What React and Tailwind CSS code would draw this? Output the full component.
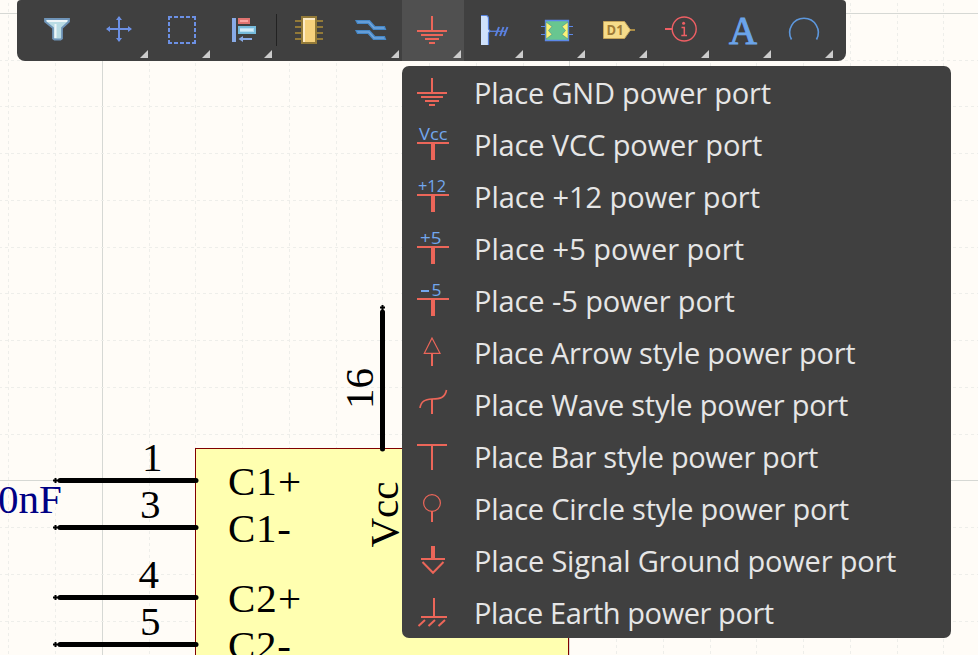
import React from "react";

const RED = "#ec6659";
const BLUE = "#72a7ee";

const VERTICALS = [8, 55, 102, 149, 195, 242, 289, 336, 382, 429, 476, 523, 569, 616, 663, 710, 756, 803, 850, 897, 943];
const HORIZONTALS = [13, 60, 106, 153, 200, 247, 293, 340, 387, 434, 480, 527, 574, 621];
const MAJOR_X = [102, 569];
const MAJOR_Y = [13, 480];

const PINS = [
  { n: "1", nx: 142, name: "C1+", w: 73, y: 480.5 },
  { n: "3", nx: 140, name: "C1-", w: 63, y: 527.5 },
  { n: "4", nx: 138.5, name: "C2+", w: 73, y: 597.5 },
  { n: "5", nx: 140, name: "C2-", w: 63, y: 644.5 },
];

function Schematic() {
  return (
    <svg width="978" height="655" viewBox="0 0 978 655" className="block font-['Liberation_Serif',serif]">
      {VERTICALS.map((x) => (
        <line key={x} x1={x + 0.5} x2={x + 0.5} y1="3" y2="655" stroke={MAJOR_X.includes(x) ? "#d6d8d4" : "#eeeeea"} strokeDasharray={MAJOR_X.includes(x) ? undefined : "3 3"} />
      ))}
      {HORIZONTALS.map((y) => (
        <line key={y} y1={y + 0.5} y2={y + 0.5} x1="-1" x2="978" stroke={MAJOR_Y.includes(y) ? "#d6d8d4" : "#eeeeea"} strokeDasharray={MAJOR_Y.includes(y) ? undefined : "3 3"} />
      ))}
      <rect x="195.5" y="448.5" width="373" height="260" fill="#ffffb0" stroke="#800000" />
      {PINS.map((p) => (
        <g key={p.n}>
          <path d={`M60 ${p.y}H196`} stroke="#000" strokeWidth="5" strokeLinecap="round" />
          <path d={`M53 ${p.y}H60M55.5 ${p.y - 2.5}v5`} stroke="#000" strokeWidth="2" />
          <text x={p.nx} y={p.y - 9.5} fontSize="41">{p.n}</text>
          <text x="228" y={p.y + 14} fontSize="41" textLength={p.w}>{p.name}</text>
        </g>
      ))}
      <path d="M382.5 312V449" stroke="#000" strokeWidth="5" strokeLinecap="round" />
      <path d="M382.5 305V312M380 307.5h5" stroke="#000" strokeWidth="2" />
      <text transform="translate(373 409) rotate(-90)" fontSize="41">16</text>
      <text transform="translate(397.5 547.5) rotate(-90)" fontSize="41">Vcc</text>
      <text x="-2" y="513" fontSize="41" fill="#000084">0nF</text>
    </svg>
  );
}

const TOOLS = [
  {
    id: "filter",
    art: (
      <>
        <path d="M18 19H42V21.5L35 28V38.5L33.5 39.5H27.5L26 38.5V28L18 21.5Z" fill="#b9dce4" stroke="#6f94b8" strokeWidth="1.8" />
        <path d="M20 21H40M28.5 24V38" stroke="#eef5f8" strokeWidth="2" />
      </>
    ),
  },
  {
    id: "move",
    more: true,
    art: (
      <>
        <path d="M18 29H42M30 17V41" stroke="#6c90e4" strokeWidth="2" />
        <path d="M17 29l4-3v6zM43 29l-4-3v6zM30 16l-3 4h6zM30 42l-3-4h6z" fill="#6c90e4" />
      </>
    ),
  },
  {
    id: "select",
    more: true,
    art: <path d="M17 17H45M17 43H45M18 16V44M44 16V44" fill="none" stroke="#6c90e4" strokeWidth="2" strokeDasharray="4 2" />,
  },
  {
    id: "align",
    more: true,
    art: (
      <>
        <path d="M19 18h4v24h-4z" fill="#88aae6" />
        <path d="M26 19h10v4H26z" fill="#f9a4a0" stroke="#df7370" strokeWidth="2" />
        <path d="M26 27h16v6H26z" fill="#b4dcf0" stroke="#76bbdc" strokeWidth="2" />
        <path d="M27 29h13v2H27z" fill="#d2ecf8" />
        <path d="M28 39H39" stroke="#88aae6" strokeWidth="2" />
        <path d="M25.5 39l4.5-3v6z" fill="#88aae6" />
      </>
    ),
  },
  {
    id: "part",
    divided: true,
    art: (
      <>
        <path d="M17 21H45M17 27H45M17 33H45M17 39H45" stroke="#937a38" strokeWidth="2" />
        <path d="M24 17h14v26H24z" fill="#f6d17c" stroke="#937a38" strokeWidth="2" />
        <path d="M26 42V19h11" fill="none" stroke="#fdebc6" strokeWidth="2" />
      </>
    ),
  },
  {
    id: "wire",
    more: true,
    art: (
      <path
        d="M16 20.7H29.5L35 26.7H44.5L45.5 29.3H33.5L28 23.3H17.5ZM16 30.7H29.5L35 36.7H44.5L45.5 39.3H33.5L28 33.3H17.5Z"
        fill="#70a5dc"
        stroke="#4588c8"
        strokeWidth="1.2"
      />
    ),
  },
  {
    id: "power",
    more: true,
    active: true,
    art: <path d="M29 16h2v14h14v2H15v-2h14zM19 34h22v2H19zM23 38h14v2H23zM27 42h6v2h-6z" fill={RED} />,
  },
  {
    id: "harness",
    more: true,
    art: (
      <>
        <path d="M17 15.5H22Q24.5 15.5 24.5 19V29L26 31L24.5 33V45H17Z" fill="#cfe1fb" />
        <path d="M17 15.5H22Q24.5 15.5 24.5 19V29L26 31L24.5 33V45" fill="none" stroke="#5580dc" strokeWidth="1.2" />
        <path d="M26 31.3H42" stroke="#5a80dc" strokeWidth="1.3" />
        <path d="M31.5 36L35 27M36 36L39.5 27M40 36L43.5 27" stroke="#5a80e0" strokeWidth="2" />
      </>
    ),
  },
  {
    id: "sheet",
    more: true,
    art: (
      <>
        <path d="M15 26.5H47M15 34.5H47" stroke="#5c88e8" strokeWidth="1.2" />
        <path d="M19.5 20.5h23v20h-23z" fill="#68c690" stroke="#5c88e8" strokeWidth="1.3" />
        <path d="M20 22L26 26.5L22.5 30.5L26 34.5L20 39ZM42 22L36 26.5L39.5 30.5L36 34.5L42 39Z" fill="#fbf276" stroke="#4c8c8c" strokeWidth="0.6" />
      </>
    ),
  },
  {
    id: "designator",
    more: true,
    art: (
      <>
        <path d="M42 30H47" stroke="#a98b45" strokeWidth="2" />
        <path d="M15.5 21.5H36.5L42.5 30L36.5 38.5H15.5Z" fill="#f6dc8a" stroke="#c5a45a" />
        <text x="18.6" y="35.3" fontSize="14.5" fontWeight="700" fill="#a17c38" className="font-['Open_Sans',sans-serif]" textLength="17" lengthAdjust="spacingAndGlyphs">D1</text>
      </>
    ),
  },
  {
    id: "info",
    more: true,
    art: (
      <>
        <circle cx="34.2" cy="29" r="12" fill="none" stroke="#ee5f64" strokeWidth="1.4" />
        <path d="M15 29H22" stroke="#ee5f64" strokeWidth="2" />
        <circle cx="33.6" cy="23.2" r="1.5" fill="#ee5f64" />
        <path d="M31.5 27.5H34.3V35.5M31.3 35.5H37" fill="none" stroke="#ee5f64" strokeWidth="1.5" />
      </>
    ),
  },
  {
    id: "text",
    more: true,
    art: <text x="17" y="43.5" fontSize="40" fill="#6ba4ea" stroke="#6ba4ea" strokeWidth="1" textLength="28" lengthAdjust="spacingAndGlyphs" className="font-['Liberation_Serif',serif]">A</text>,
  },
  {
    id: "arc",
    more: true,
    art: <path d="M17.5 39.5A14.3 14.3 0 1 1 42.5 39.5" fill="none" stroke="#5d97dc" strokeWidth="1.6" />,
  },
];

function Toolbar() {
  return (
    <div className="absolute left-[17px] top-0 flex h-[61px] w-[829px] rounded-t-[4px] rounded-b-[8px] bg-[#404040] px-[10px]">
      {TOOLS.map((t) => (
        <React.Fragment key={t.id}>
          {t.divided && <div className="ml-px mr-px mt-[14px] h-8 w-px bg-[#222222]" />}
          <button className={t.active ? "h-[61px] w-[62px] bg-[#505050]" : "h-[61px] w-[62px]"}>
            <svg width="62" height="61" viewBox="0 0 62 61" className="block">
              {t.art}
              {t.more && <path d="M59 50V58H51Z" fill="#cccccc" />}
            </svg>
          </button>
        </React.Fragment>
      ))}
    </div>
  );
}

function Rail({ label, x, width }) {
  return (
    <>
      <text x={x} y="22" fontSize="16.5" fill={BLUE} textLength={width} lengthAdjust="spacingAndGlyphs" className="font-['Open_Sans',sans-serif]">{label}</text>
      <path d="M1 24H33V26H19V42H15V26H1Z" fill={RED} />
    </>
  );
}

const ITEMS = [
  { label: "Place GND power port", track: "tracking-[-0.2px]", art: <path d="M15 12h2v14h14v2H1v-2h14zM5 30h22v2H5zM9 34h14v2H9zM13 38h6v2h-6z" fill={RED} /> },
  { label: "Place VCC power port", track: "tracking-[-0.12px]", art: <Rail label="Vcc" x="3" width="28.5" /> },
  { label: "Place +12 power port", track: "tracking-[-0.03px]", art: <Rail label="+12" x="2" width="28" /> },
  { label: "Place +5 power port", track: "tracking-[0px]", art: <Rail label="+5" x="4" width="21.5" /> },
  {
    label: "Place -5 power port",
    track: "tracking-[-0.1px]",
    art: (
      <>
        <path d="M5 17H13" stroke={BLUE} strokeWidth="2" />
        <Rail label="5" x="15.5" width="10" />
      </>
    ),
  },
  { label: "Place Arrow style power port", track: "tracking-[-0.26px]", art: <g fill="none" stroke={RED}><path d="M16 12L8.3 27.3H24Z" strokeWidth="1.2" /><path d="M16 27V40" strokeWidth="2" /></g> },
  { label: "Place Wave style power port", track: "tracking-[-0.23px]", art: <g fill="none" stroke={RED}><path d="M4 30C5 23 9 21.5 16 21C24 21 29 20 30.5 12" strokeWidth="1.6" /><path d="M16 21V36" strokeWidth="2" /></g> },
  { label: "Place Bar style power port", track: "tracking-[-0.36px]", art: <path d="M1 14H31V16H17V40H15V16H1Z" fill={RED} /> },
  { label: "Place Circle style power port", track: "tracking-[-0.23px]", art: <g fill="none" stroke={RED}><circle cx="16" cy="21" r="8.4" strokeWidth="1.2" /><path d="M16 29V40" strokeWidth="2" /></g> },
  { label: "Place Signal Ground power port", track: "tracking-[-0.2px]", art: <><path d="M15 12h4v12h10v2H5v-2h10z" fill={RED} /><path d="M6.5 28L17 38.7L27.5 28" fill="none" stroke={RED} strokeWidth="2" /></> },
  { label: "Place Earth power port", track: "tracking-[-0.42px]", art: <><path d="M17 12h2v18h12v2H5v-2h12z" fill={RED} /><path d="M2.5 40L9 34M12.5 40L19 34M22.5 40L29 34" stroke={RED} strokeWidth="2" /></> },
];

function PowerMenu() {
  return (
    <div className="absolute left-[402px] top-[66px] flex h-[572px] w-[549px] flex-col rounded-[7px] bg-[#404040] pl-[14px]">
      {ITEMS.map((item) => (
        <div key={item.label} className="flex h-[52px] items-center">
          <svg width="36" height="52" viewBox="0 0 36 52" className="block shrink-0">{item.art}</svg>
          <span className={"ml-[22px] mt-[2px] whitespace-nowrap font-['Open_Sans','Noto_Sans',sans-serif] text-[29px] leading-[40px] text-[#e6e6e6] " + item.track}>{item.label}</span>
        </div>
      ))}
    </div>
  );
}

export default function App() {
  return (
    <div className="relative h-[655px] w-[978px] overflow-hidden bg-[#fffcf7]">
      <Schematic />
      <Toolbar />
      <PowerMenu />
    </div>
  );
}
